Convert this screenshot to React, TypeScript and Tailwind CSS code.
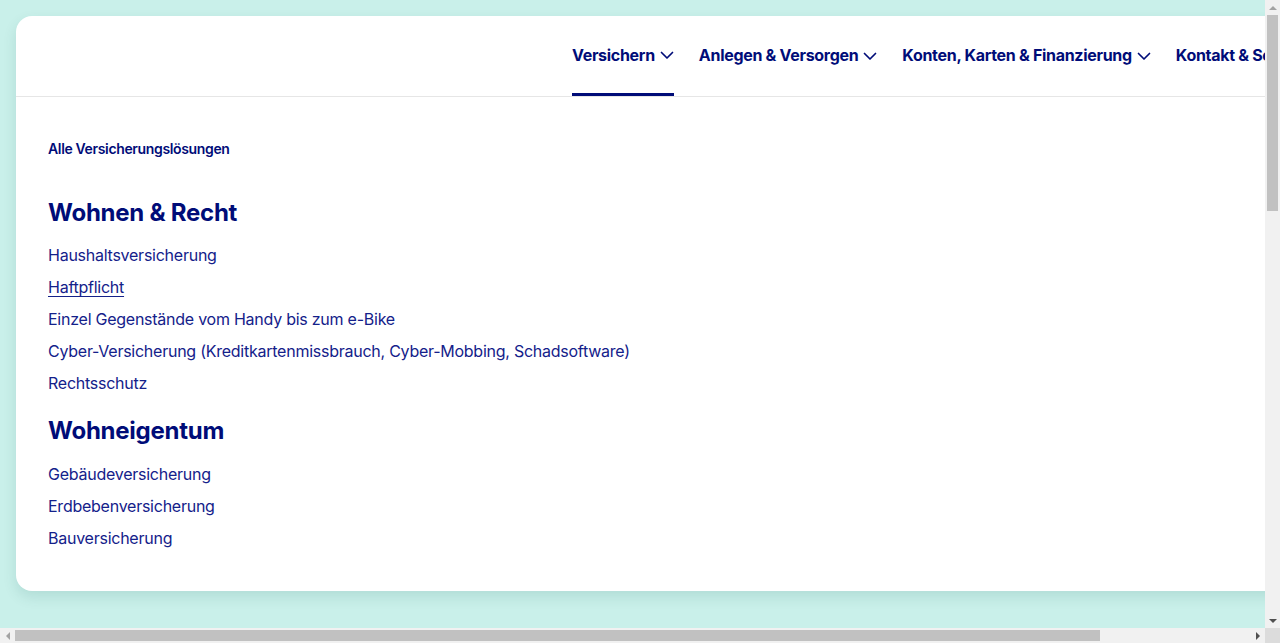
import React from 'react';

type Section = {
  title: string;
  links: string[];
};

const sections: Section[] = [
  {
    title: 'Wohnen & Recht',
    links: [
      'Haushaltsversicherung',
      'Haftpflicht',
      'Einzel Gegenstände vom Handy bis zum e-Bike',
      'Cyber-Versicherung (Kreditkartenmissbrauch, Cyber-Mobbing, Schadsoftware)',
      'Rechtsschutz',
    ],
  },
  {
    title: 'Wohneigentum',
    links: ['Gebäudeversicherung', 'Erdbebenversicherung', 'Bauversicherung'],
  },
];

const navItems = ['Versichern', 'Anlegen & Versorgen', 'Konten, Karten & Finanzierung', 'Kontakt & Service'];

const Chevron = () => (
  <svg width="14" height="14" viewBox="0 0 14 14" fill="none" className="ml-[5px] mt-[1px]">
    <path d="M1.5 4.5 7 10l5.5-5.5" stroke="currentColor" strokeWidth="1.7" strokeLinecap="round" strokeLinejoin="round" />
  </svg>
);

// little triangle used on the scrollbar buttons
const Arrow = ({ dir }: { dir: 'up' | 'down' | 'left' | 'right' }) => {
  const pts = {
    up: '4,1 8,5 0,5',
    down: '0,1 8,1 4,5',
    left: '5,0 5,8 1,4',
    right: '1,0 5,4 1,8',
  }[dir];
  const horiz = dir === 'left' || dir === 'right';
  return (
    <svg width={horiz ? 6 : 8} height={horiz ? 8 : 6} viewBox={horiz ? '0 0 6 8' : '0 0 8 6'}>
      <polygon points={pts} fill={dir === 'up' || dir === 'left' ? '#a3a3a3' : '#505050'} />
    </svg>
  );
};

const App: React.FC = () => {
  return (
    <div className="h-screen w-screen flex flex-col overflow-hidden bg-[#f1f1f1]">
      <div className="flex flex-1 min-h-0">
        {/* page viewport, the content is wider and taller than the window */}
        <div className="flex-1 min-w-0 overflow-hidden bg-[#c9f0ea]">
          <div className="w-[1440px] min-h-[1916px] p-4 font-['Inter',sans-serif] text-[#0a1a80]">
            <div className="bg-white rounded-2xl shadow-[0_6px_14px_rgba(0,80,70,0.12)]">
              {/* Header */}
              <header className="h-[81px] border-b border-[#e6e6e6] flex items-stretch pl-[556px]">
                <nav className="flex items-stretch gap-[25px]">
                  {navItems.map((item, i) => (
                    <button
                      key={item}
                      className={`flex items-center h-full text-[16px] font-bold tracking-[-0.3px] text-[#000c78] ${
                        i === 0 ? 'border-b-[3px] border-[#000c78]' : 'pb-[2px]'
                      }`}
                    >
                      <span className="whitespace-nowrap">{item}</span>
                      <Chevron />
                    </button>
                  ))}
                </nav>
              </header>

              {/* Content */}
              <div className="px-8 pt-[42px] pb-[37px]">
                <a className="block text-[14px] leading-5 font-semibold text-[#000c78] tracking-[-0.35px]">
                  Alle Versicherungslösungen
                </a>
                <div className="mt-[38px]">
                  {sections.map((section, si) => (
                    <div key={section.title} className={si > 0 ? 'mt-4' : ''}>
                      <h2 className="text-[24px] leading-8 font-bold text-[#000c78] tracking-[-0.25px]">{section.title}</h2>
                      <ul className={si === 0 ? 'mt-[10px]' : 'mt-[11px]'}>
                        {section.links.map((link) => (
                          <li key={link} className="h-8 flex items-center">
                            <a
                              className={`text-[16px] leading-6 tracking-[-0.25px] text-[#14218a] ${
                                link === 'Haftpflicht' ? 'underline underline-offset-[3px]' : ''
                              }`}
                            >
                              {link}
                            </a>
                          </li>
                        ))}
                      </ul>
                    </div>
                  ))}
                </div>
              </div>
            </div>
          </div>
        </div>

        {/* vertical scrollbar */}
        <div className="w-[15px] flex flex-col bg-[#f1f1f1]">
          <div className="h-[15px] flex items-center justify-center">
            <Arrow dir="up" />
          </div>
          <div className="flex-1 px-[2px]">
            <div className="h-[196px] bg-[#c1c1c1]" />
          </div>
          <div className="h-[15px] flex items-center justify-center">
            <Arrow dir="down" />
          </div>
        </div>
      </div>

      {/* horizontal scrollbar */}
      <div className="h-[15px] flex bg-[#f1f1f1]">
        <div className="w-[15px] flex items-center justify-center">
          <Arrow dir="left" />
        </div>
        <div className="flex-1 py-[2px]">
          <div className="w-[1085px] h-full bg-[#c1c1c1]" />
        </div>
        <div className="w-[15px] flex items-center justify-center">
          <Arrow dir="right" />
        </div>
        <div className="w-[15px] bg-[#dcdcdc]" />
      </div>
    </div>
  );
};

export default App;
